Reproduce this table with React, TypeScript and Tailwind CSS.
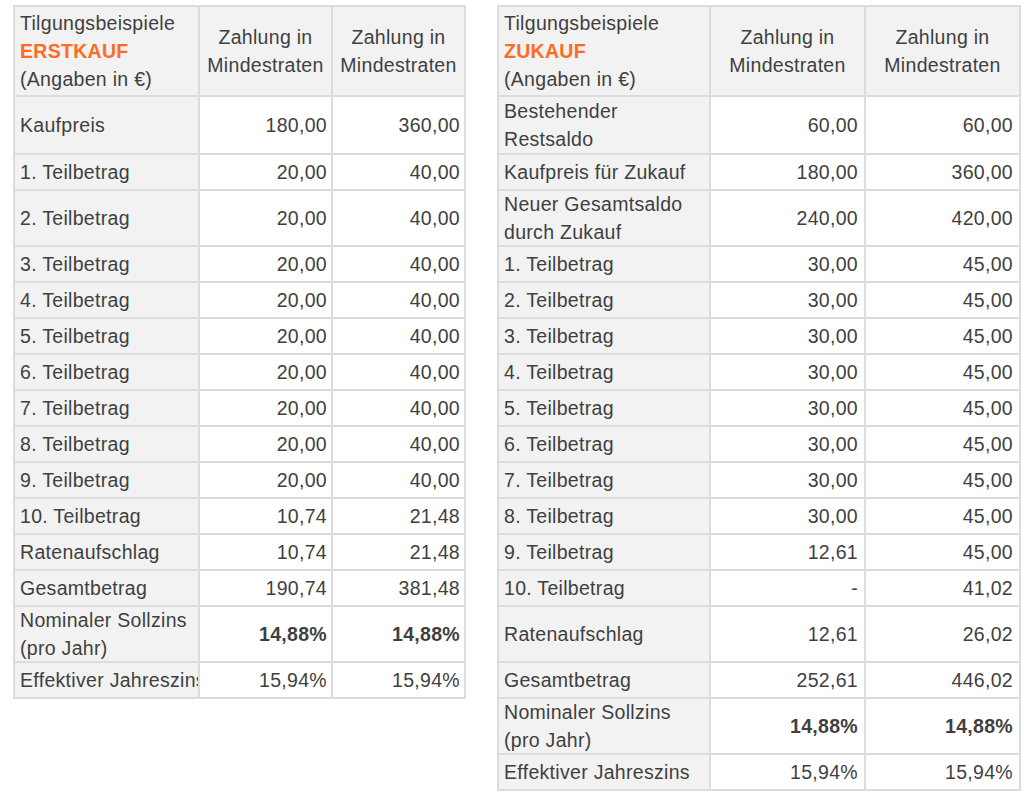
import type { ReactNode } from "react";

// =============================================================================
// Data
// =============================================================================

type RowHeight = "first" | "tall" | "normal";

interface Row {
  label: ReactNode;
  a: string;
  b: string;
  h: RowHeight;
  bold?: boolean;
  clip?: boolean;
}

const HEIGHT_CLASS: Record<RowHeight, string> = {
  first: "h-[56px]",
  tall: "h-[54px]",
  normal: "h-[34px]",
};

const ERSTKAUF_ROWS: Row[] = [
  { label: "Kaufpreis", a: "180,00", b: "360,00", h: "first" },
  { label: "1. Teilbetrag", a: "20,00", b: "40,00", h: "normal" },
  { label: "2. Teilbetrag", a: "20,00", b: "40,00", h: "tall" },
  { label: "3. Teilbetrag", a: "20,00", b: "40,00", h: "normal" },
  { label: "4. Teilbetrag", a: "20,00", b: "40,00", h: "normal" },
  { label: "5. Teilbetrag", a: "20,00", b: "40,00", h: "normal" },
  { label: "6. Teilbetrag", a: "20,00", b: "40,00", h: "normal" },
  { label: "7. Teilbetrag", a: "20,00", b: "40,00", h: "normal" },
  { label: "8. Teilbetrag", a: "20,00", b: "40,00", h: "normal" },
  { label: "9. Teilbetrag", a: "20,00", b: "40,00", h: "normal" },
  { label: "10. Teilbetrag", a: "10,74", b: "21,48", h: "normal" },
  { label: "Ratenaufschlag", a: "10,74", b: "21,48", h: "normal" },
  { label: "Gesamtbetrag", a: "190,74", b: "381,48", h: "normal" },
  {
    label: (
      <>
        Nominaler Sollzins
        <br />
        (pro Jahr)
      </>
    ),
    a: "14,88%",
    b: "14,88%",
    h: "tall",
    bold: true,
  },
  { label: "Effektiver Jahreszins", a: "15,94%", b: "15,94%", h: "normal", clip: true },
];

const ZUKAUF_ROWS: Row[] = [
  {
    label: (
      <>
        Bestehender
        <br />
        Restsaldo
      </>
    ),
    a: "60,00",
    b: "60,00",
    h: "first",
  },
  { label: "Kaufpreis für Zukauf", a: "180,00", b: "360,00", h: "normal" },
  {
    label: (
      <>
        Neuer Gesamtsaldo
        <br />
        durch Zukauf
      </>
    ),
    a: "240,00",
    b: "420,00",
    h: "tall",
  },
  { label: "1. Teilbetrag", a: "30,00", b: "45,00", h: "normal" },
  { label: "2. Teilbetrag", a: "30,00", b: "45,00", h: "normal" },
  { label: "3. Teilbetrag", a: "30,00", b: "45,00", h: "normal" },
  { label: "4. Teilbetrag", a: "30,00", b: "45,00", h: "normal" },
  { label: "5. Teilbetrag", a: "30,00", b: "45,00", h: "normal" },
  { label: "6. Teilbetrag", a: "30,00", b: "45,00", h: "normal" },
  { label: "7. Teilbetrag", a: "30,00", b: "45,00", h: "normal" },
  { label: "8. Teilbetrag", a: "30,00", b: "45,00", h: "normal" },
  { label: "9. Teilbetrag", a: "12,61", b: "45,00", h: "normal" },
  { label: "10. Teilbetrag", a: "-", b: "41,02", h: "normal" },
  { label: "Ratenaufschlag", a: "12,61", b: "26,02", h: "tall" },
  { label: "Gesamtbetrag", a: "252,61", b: "446,02", h: "normal" },
  {
    label: (
      <>
        Nominaler Sollzins
        <br />
        (pro Jahr)
      </>
    ),
    a: "14,88%",
    b: "14,88%",
    h: "tall",
    bold: true,
  },
  { label: "Effektiver Jahreszins", a: "15,94%", b: "15,94%", h: "normal" },
];

// =============================================================================
// Table
// =============================================================================

interface PlanTableProps {
  kind: string;
  rows: Row[];
  /** full grid-cols class, written out so Tailwind picks it up */
  cols: string;
  numPad: string;
}

function PlanTable({ kind, rows, cols, numPad }: PlanTableProps) {
  return (
    <div className={`grid ${cols} gap-[2px] bg-[#dcdcdc] p-[2px]`}>
      {/* Header */}
      <div className="flex h-[88px] flex-col justify-center bg-[#f2f2f2] pl-[5px]">
        <span>Tilgungsbeispiele</span>
        <span className="font-bold text-[#ff6b22]">{kind}</span>
        <span>(Angaben in €)</span>
      </div>
      {[0, 1].map((i) => (
        <div
          key={i}
          className="flex h-[88px] flex-col items-center justify-center bg-[#f2f2f2] text-center"
        >
          <span>Zahlung in</span>
          <span>Mindestraten</span>
        </div>
      ))}

      {/* Body */}
      {rows.map((row, idx) => {
        const h = HEIGHT_CLASS[row.h];
        const num = `flex ${h} items-center justify-end bg-white ${numPad} ${
          row.bold ? "font-bold" : ""
        }`;
        return (
          <div key={idx} className="contents">
            <div
              className={`flex ${h} items-center bg-[#f2f2f2] pl-[5px] ${
                row.clip ? "overflow-hidden whitespace-nowrap" : ""
              }`}
            >
              <span>{row.label}</span>
            </div>
            <div className={num}>{row.a}</div>
            <div className={num}>{row.b}</div>
          </div>
        );
      })}
    </div>
  );
}

// =============================================================================
// App
// =============================================================================

export default function App() {
  return (
    <div className="min-h-screen bg-white font-['Liberation_Sans',Arial,sans-serif] text-[19.5px] leading-[28px] tracking-[0.3px] text-[#3f3f3f]">
      <div className="flex items-start gap-[31px] pl-[13px] pt-[5px]">
        <PlanTable
          kind="ERSTKAUF"
          rows={ERSTKAUF_ROWS}
          cols="grid-cols-[183px_131px_131px]"
          numPad="pr-[4px]"
        />
        <PlanTable
          kind="ZUKAUF"
          rows={ZUKAUF_ROWS}
          cols="grid-cols-[210px_153px_153px]"
          numPad="pr-[6px]"
        />
      </div>
    </div>
  );
}
